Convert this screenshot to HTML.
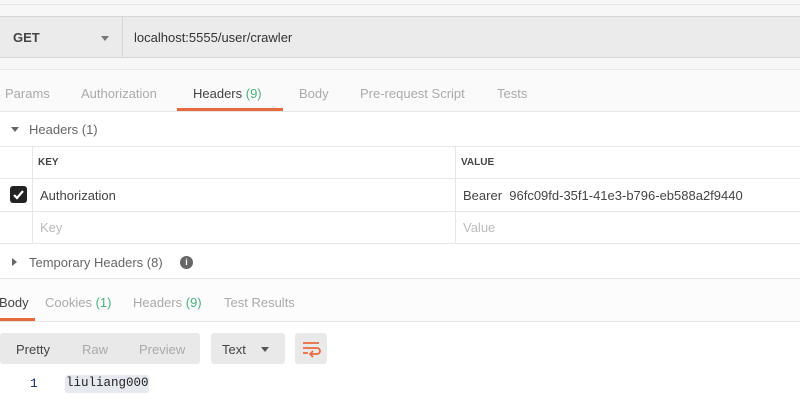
<!DOCTYPE html>
<html><head><meta charset="utf-8"><style>
*{margin:0;padding:0;box-sizing:border-box}
body{width:800px;height:420px;overflow:hidden;background:#fff;font-family:"Liberation Sans",sans-serif;font-size:13px;color:#505050;position:relative}
.a{position:absolute}
.g{color:#4caf7d}
</style></head><body>
<div class="a" style="left:0;top:0;width:800px;height:69px;background:#f7f7f7"></div>
<div class="a" style="left:0;top:4px;width:800px;height:1px;background:#e6e6e6"></div>
<div class="a" style="left:0;top:16px;width:800px;height:42px;background:#ebebeb;border-top:1px solid #d6d6d6;border-bottom:1px solid #d6d6d6"></div>
<div class="a" style="left:122px;top:17px;width:1px;height:40px;background:#d6d6d6"></div>
<div class="a" style="left:13px;top:30px;font-weight:bold;color:#444">GET</div>
<div class="a" style="left:101px;top:36px;border-left:4px solid transparent;border-right:4px solid transparent;border-top:5px solid #777"></div>
<div class="a" style="left:134px;top:30px;color:#333">localhost:5555/user/crawler</div>
<div class="a" style="left:0;top:69px;width:800px;height:43px;background:#fafafa;border-top:1px solid #e8e8e8;border-bottom:1px solid #e6e6e6"></div>
<div class="a" style="top:86px;left:5px;color:#aaa">Params</div>
<div class="a" style="top:86px;left:81px;color:#aaa">Authorization</div>
<div class="a" style="top:86px;left:193px;color:#444">Headers <span class="g">(9)</span></div>
<div class="a" style="left:177px;top:108px;width:106px;height:3px;background:#e8693e"></div>
<div class="a" style="top:86px;left:299px;color:#aaa">Body</div>
<div class="a" style="top:86px;left:360px;color:#aaa">Pre-request Script</div>
<div class="a" style="top:86px;left:497px;color:#aaa">Tests</div>
<div class="a" style="left:11px;top:127px;border-left:4px solid transparent;border-right:4px solid transparent;border-top:5px solid #666"></div>
<div class="a" style="left:29px;top:122px;color:#666">Headers (1)</div>
<div class="a" style="left:0;top:146px;width:800px;height:1px;background:#e6e6e6"></div>
<div class="a" style="left:0;top:178px;width:800px;height:1px;background:#e6e6e6"></div>
<div class="a" style="left:0;top:211px;width:800px;height:1px;background:#e6e6e6"></div>
<div class="a" style="left:0;top:243px;width:800px;height:1px;background:#e6e6e6"></div>
<div class="a" style="left:32px;top:146px;width:1px;height:97px;background:#e6e6e6"></div>
<div class="a" style="left:455px;top:146px;width:1px;height:97px;background:#e6e6e6"></div>
<div class="a" style="left:38px;top:157px;font-size:10px;font-weight:bold;color:#444">KEY</div>
<div class="a" style="left:461px;top:157px;font-size:10px;font-weight:bold;color:#444">VALUE</div>
<div class="a" style="left:10px;top:186px;width:17px;height:17px;background:#222;border-radius:3px"><svg width="17" height="17"><path d="M4 9l3 3 6-7" stroke="#fff" stroke-width="2.2" fill="none"/></svg></div>
<div class="a" style="left:40px;top:188px;color:#444">Authorization</div>
<div class="a" style="left:463px;top:188px;color:#444">Bearer&nbsp; 96fc09fd-35f1-41e3-b796-eb588a2f9440</div>
<div class="a" style="left:40px;top:220px;color:#bbb">Key</div>
<div class="a" style="left:463px;top:220px;color:#bbb">Value</div>
<div class="a" style="left:12px;top:258px;border-top:4px solid transparent;border-bottom:4px solid transparent;border-left:5px solid #666"></div>
<div class="a" style="left:29px;top:255px;color:#666">Temporary Headers (8)</div>
<div class="a" style="left:180px;top:256px;width:13px;height:13px;border-radius:50%;background:#666;color:#fff;font-size:9px;font-weight:bold;text-align:center;line-height:13px">i</div>
<div class="a" style="left:0;top:278px;width:800px;height:1px;background:#e6e6e6"></div>
<div class="a" style="left:0;top:279px;width:800px;height:43px;background:#fcfcfc;border-bottom:1px solid #e6e6e6"></div>
<div class="a" style="top:295px;left:-1px;color:#444">Body</div>
<div class="a" style="left:0;top:318px;width:35px;height:3px;background:#e8693e"></div>
<div class="a" style="top:295px;left:45px;color:#aaa">Cookies <span class="g">(1)</span></div>
<div class="a" style="top:295px;left:133px;color:#aaa">Headers <span class="g">(9)</span></div>
<div class="a" style="top:295px;left:224px;color:#aaa">Test Results</div>
<div class="a" style="left:0;top:333px;width:200px;height:31px;background:#e9e9e9;border-radius:3px"></div>
<div class="a" style="left:16px;top:342px;color:#444">Pretty</div>
<div class="a" style="left:82px;top:342px;color:#aaa">Raw</div>
<div class="a" style="left:139px;top:342px;color:#aaa">Preview</div>
<div class="a" style="left:211px;top:333px;width:74px;height:31px;background:#e9e9e9;border-radius:3px"></div>
<div class="a" style="left:222px;top:342px;color:#444">Text</div>
<div class="a" style="left:261px;top:347px;border-left:4px solid transparent;border-right:4px solid transparent;border-top:5px solid #555"></div>
<div class="a" style="left:295px;top:333px;width:32px;height:31px;background:#e9e9e9;border-radius:3px"><svg width="32" height="31"><path d="M8 10h16M8 15h14a3 3 0 0 1 0 6h-6M8 20h5" stroke="#e8693e" stroke-width="1.8" fill="none"/><path d="M18 18l-3 3 3 3" stroke="#e8693e" stroke-width="1.6" fill="none"/></svg></div>
<div class="a" style="left:30px;top:376px;font-family:'Liberation Mono',monospace;color:#1a2a6a">1</div>
<div class="a" style="left:65px;top:375px;width:84px;height:18px;background:#e6e9f0;border-radius:3px"></div>
<div class="a" style="left:66px;top:376px;font-family:'Liberation Mono',monospace;font-size:12.5px;color:#222">liuliang000</div>
</body></html>
